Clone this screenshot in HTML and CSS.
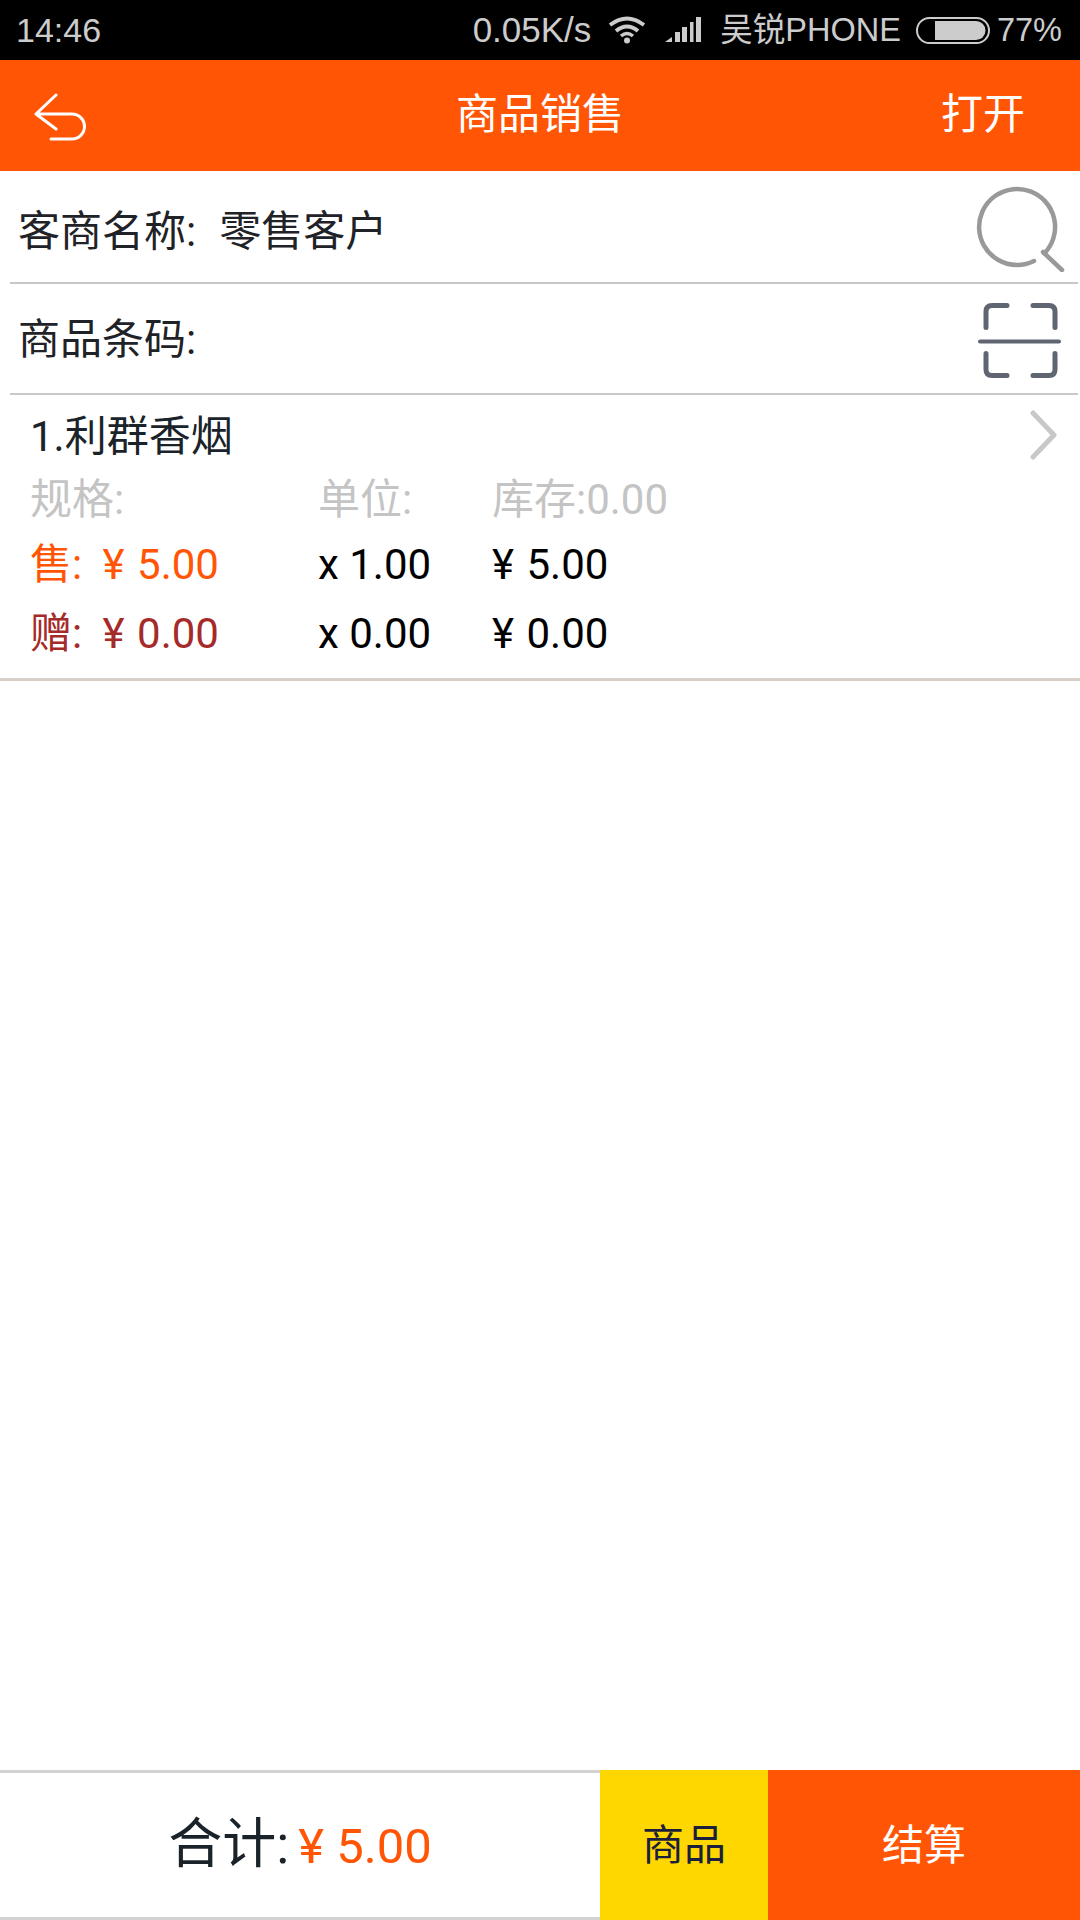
FILE: index.html
```html
<!DOCTYPE html>
<html lang="zh-CN">
<head>
    <meta charset="UTF-8">
    <meta name="viewport" content="width=device-width, initial-scale=1.0">
    <title>商品销售</title>
    <link rel="stylesheet" href="styles.css">
</head>
<body>
    <div class="page">
        <!-- Status bar -->
        <div class="status-bar">
            <span class="status-time">14:46</span>
            <span class="status-speed">0.05K/s</span>
            <svg class="icon-wifi" width="38" height="28" viewBox="0 0 38 28">
                <path d="M2 9 Q19 -4 36 9" fill="none" stroke="#ccc" stroke-width="4"/>
                <path d="M8 15 Q19 6 30 15" fill="none" stroke="#ccc" stroke-width="4"/>
                <path d="M13 20 Q19 15 25 20" fill="none" stroke="#ccc" stroke-width="3.5"/>
                <circle cx="19" cy="24.5" r="3" fill="#ccc"/>
            </svg>
            <svg class="icon-signal" width="37" height="26" viewBox="0 0 37 26">
                <path d="M0 25 L7 20 V25 Z" fill="#ccc"/>
                <rect x="10" y="15" width="5" height="10" fill="#ccc"/>
                <rect x="17" y="10" width="5" height="15" fill="#ccc"/>
                <rect x="25" y="5" width="3.5" height="20" fill="#ccc"/>
                <rect x="31" y="0" width="5" height="25" fill="#ccc"/>
            </svg>
            <span class="status-carrier">吴锐PHONE</span>
            <svg class="icon-battery" width="74" height="27" viewBox="0 0 74 27">
                <rect x="1" y="1" width="72" height="25" rx="12.5" fill="none" stroke="#ccc" stroke-width="2"/>
                <path d="M19 4 H60 A9.5 9.5 0 0 1 60 23 H19 Z" fill="#ccc"/>
            </svg>
            <span class="status-battery">77%</span>
        </div>

        <!-- Header -->
        <div class="app-header">
            <svg class="back-icon" width="56" height="50" viewBox="0 0 56 50">
                <path d="M22 2 L2 21 L22 36 M2 21 H38 A12.5 12.5 0 0 1 38 46 H17" fill="none" stroke="#fff" stroke-width="3" stroke-linecap="round" stroke-linejoin="round"/>
            </svg>
            <h1 class="app-title">商品销售</h1>
            <span class="app-action">打开</span>
        </div>

        <!-- Search rows -->
        <div class="form-row form-row-customer">
            <span class="form-label">客商名称:</span>
            <span class="form-value">零售客户</span>
            <svg class="row-icon" width="90" height="90" viewBox="0 0 90 90">
                <path d="M59 79 A38 38 0 1 1 69.4 71.4" fill="none" stroke="#999" stroke-width="4.5" stroke-linecap="round"/>
                <path d="M68 70 L87 88" fill="none" stroke="#999" stroke-width="4.5" stroke-linecap="round"/>
            </svg>
        </div>
        <div class="form-row form-row-barcode">
            <span class="form-label">商品条码:</span>
            <svg class="row-icon" width="90" height="80" viewBox="0 0 90 80">
                <path d="M32 6.5 H17 Q11 6.5 11 12.5 V28.5 M58 6.5 H74 Q80 6.5 80 12.5 V28.5 M11 54.5 V70.5 Q11 76.5 17 76.5 H32 M80 54.5 V70.5 Q80 76.5 74 76.5 H58" fill="none" stroke="#5f6672" stroke-width="5" stroke-linecap="round"/>
                <path d="M5 42.5 H84" fill="none" stroke="#5f6672" stroke-width="4" stroke-linecap="round"/>
            </svg>
        </div>

        <!-- Goods list -->
        <div class="goods-list">
            <div class="goods-item">
                <div class="goods-name-row">
                    <span class="goods-name">1.利群香烟</span>
                    <svg class="chevron" width="28" height="50" viewBox="0 0 28 50">
                        <path d="M3 3 L24 25 L3 47" fill="none" stroke="#c8c8c8" stroke-width="5" stroke-linecap="round" stroke-linejoin="round"/>
                    </svg>
                </div>
                <div class="goods-row goods-row-spec">
                    <span>规格:</span>
                    <span>单位:</span>
                    <span>库存:0.00</span>
                </div>
                <div class="goods-row goods-row-sale">
                    <span class="price-cell">售: <span class="price">¥ 5.00</span></span>
                    <span>x 1.00</span>
                    <span class="amount">¥ 5.00</span>
                </div>
                <div class="goods-row goods-row-gift">
                    <span class="price-cell">赠: <span class="price">¥ 0.00</span></span>
                    <span>x 0.00</span>
                    <span class="amount">¥ 0.00</span>
                </div>
            </div>
        </div>

        <!-- Footer -->
        <div class="footer">
            <div class="footer-total">
                <div>
                    <span class="total-label">合计:</span>
                    <span class="total-value">¥ 5.00</span>
                </div>
            </div>
            <div class="footer-goods">商品</div>
            <div class="footer-pay">结算</div>
        </div>
    </div>
</body>
</html>
```

FILE: styles.css
```css
* {
    box-sizing: border-box;
}

body {
    font-family: Roboto, "Noto Sans CJK SC", sans-serif;
    margin: 0;
    background: #fff;
}

.page {
    display: flex;
    flex-direction: column;
    width: 1080px;
    height: 1920px;
}

.status-bar {
    display: flex;
    align-items: center;
    height: 60px;
    padding: 0 18px 0 16px;
    background: #000;
    color: #ccc;
    font-family: "Liberation Sans", "Noto Sans CJK SC", sans-serif;
    font-size: 32.5px;
}

.status-time {
    font-size: 34px;
}

.status-speed {
    margin-left: auto;
    font-size: 35px;
}

.icon-wifi {
    margin-left: 17px;
}

.icon-signal {
    margin-left: 19px;
}

.status-carrier {
    margin-left: 18px;
    line-height: 60px;
}

.icon-battery {
    margin-left: 15px;
}

.status-battery {
    margin-left: 7px;
}

.app-header {
    display: grid;
    grid-template-columns: 1fr auto 1fr;
    align-items: center;
    height: 111px;
    padding: 0 55px;
    background: #ff5505;
    color: #fff;
}

.back-icon {
    margin: 4px 0 0 -21px;
}

.app-title {
    margin: 0 0 10px;
    font-size: 42px;
    font-weight: 400;
}

.app-action {
    justify-self: end;
    margin-bottom: 10px;
    font-size: 42px;
}

.form-row {
    display: flex;
    align-items: center;
    margin: 0 2px 0 10px;
    padding: 0 8px;
    border-bottom: 2px solid #c8c8c8;
    color: #1f2226;
    font-size: 42px;
}

.form-row-customer {
    height: 113px;
}

.form-row-barcode {
    height: 111px;
}

.form-label,
.form-value {
    line-height: 56px;
}

.form-row-customer .form-label,
.form-row-customer .form-value {
    margin-top: 10px;
}

.form-row-barcode .form-label {
    margin-top: 2px;
}

.form-value {
    margin-left: 23px;
}

.row-icon {
    margin-left: auto;
    margin-right: 5px;
}

.goods-list {
    flex: 1;
}

.goods-item {
    height: 286px;
    padding: 0 0 0 30px;
    border-bottom: 3px solid #d8d0c8;
    font-size: 42px;
}

.goods-name-row {
    display: flex;
    align-items: center;
    justify-content: space-between;
    height: 70px;
    padding: 10px 22px 0 0;
    color: #1a2329;
}

.goods-name {
    margin-bottom: 5px;
}

.goods-row {
    display: grid;
    grid-template-columns: 288px 174px 1fr;
    align-items: center;
    height: 68px;
    line-height: 56px;
    color: #000;
}

.goods-row-spec {
    height: 66px;
    padding-top: 4px;
    color: #c4c4c4;
}

.goods-row-gift {
    padding-top: 2px;
}

.goods-row-sale .price-cell {
    color: #ff5505;
}

.goods-row-gift .price-cell {
    color: #a52a2a;
}

.price {
    margin-left: 10px;
}

.price,
.amount {
    word-spacing: 2px;
}

.footer {
    display: flex;
    height: 150px;
}

.footer-total {
    display: flex;
    align-items: center;
    justify-content: center;
    width: 600px;
    padding-bottom: 12px;
    border-top: 3px solid #d2d2d2;
    border-bottom: 3px solid #d2d2d2;
}

.total-label {
    color: #1a2329;
    font-size: 54px;
}

.total-value {
    margin-left: 5px;
    color: #ff5505;
    font-size: 49px;
}

.footer-goods {
    display: flex;
    align-items: center;
    justify-content: center;
    width: 168px;
    padding-bottom: 8px;
    background: #ffd700;
    color: #1c1f3c;
    font-size: 42px;
}

.footer-pay {
    display: flex;
    flex: 1;
    align-items: center;
    justify-content: center;
    padding-bottom: 8px;
    background: #ff5505;
    color: #fff;
    font-size: 42px;
}
```
